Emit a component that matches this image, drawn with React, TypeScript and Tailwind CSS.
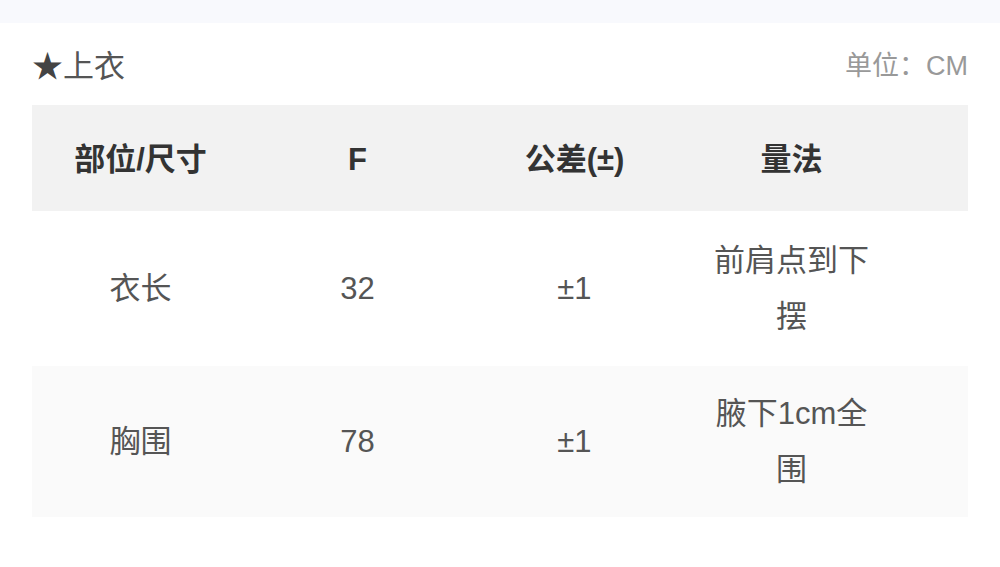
export default function App() {
  const font = { fontFamily: '"Liberation Sans", "Noto Sans CJK SC", sans-serif' };
  const rows = [
    { part: "衣长", f: "32", tol: "±1", method: "前肩点到下摆", bg: "bg-white", h: "h-[155px]" },
    { part: "胸围", f: "78", tol: "±1", method: "腋下1cm全围", bg: "bg-[#fafafa]", h: "h-[151px]" },
  ];
  return (
    <div className="w-[1000px] h-[567px] bg-white flex flex-col" style={font}>
      <div className="h-[23px] bg-[#f8f9fd]" />
      <div className="px-[32px] flex flex-col">
        <div className="h-[82px] pt-[5px] flex items-center justify-between">
          <div className="text-[31px] text-[#555] leading-none flex items-center">
            <span className="text-[#444]">★</span>
            <span>上衣</span>
          </div>
          <div className="text-[27px] text-[#999] leading-none">单位：CM</div>
        </div>
        <div className="flex flex-col">
          <div className="h-[106px] pt-[2px] bg-[#f2f2f2] flex items-center">
            {["部位/尺寸", "F", "公差(±)", "量法"].map((t) => (
              <div key={t} className="w-[217px] text-center text-[31px] font-bold text-[#333] leading-none">
                {t}
              </div>
            ))}
          </div>
          {rows.map((r) => (
            <div key={r.part} className={`${r.bg} ${r.h} flex items-center`}>
              <div className="w-[217px] text-center text-[31px] text-[#555] leading-[56px]">{r.part}</div>
              <div className="w-[217px] text-center text-[31px] text-[#555] leading-[56px]">{r.f}</div>
              <div className="w-[217px] text-center text-[31px] text-[#555] leading-[56px]">{r.tol}</div>
              <div className="w-[217px] px-[20px] text-center text-[31px] text-[#555] leading-[56px]">{r.method}</div>
            </div>
          ))}
        </div>
      </div>
    </div>
  );
}
